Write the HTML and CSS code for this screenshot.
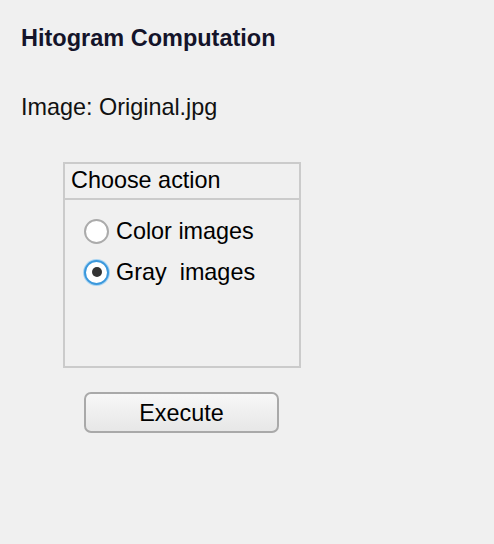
FILE: index.html
```html
<!DOCTYPE html>
<html>
<head>
<meta charset="utf-8">
<link rel="stylesheet" href="styles.css">
</head>
<body>
<div class="title">Hitogram Computation</div>
<div class="image-label">Image: Original.jpg</div>
<div class="group">
  <div class="group-header">Choose action</div>
  <div class="options">
    <div class="option">
      <span class="radio"></span>
      <span class="label">Color images</span>
    </div>
    <div class="option">
      <span class="radio checked"></span>
      <span class="label">Gray  images</span>
    </div>
  </div>
</div>
<button class="btn">Execute</button>
</body>
</html>
```
FILE: styles.css
```css
html, body {
  margin: 0;
  padding: 0;
  background: #f0f0f0;
}
body {
  font-family: "Liberation Sans", Arial, sans-serif;
  font-size: 23.4px;
  line-height: 26px;
  color: #000;
  display: flex;
  flex-direction: column;
  align-items: flex-start;
}
.title {
  margin: 25px 0 0 21px;
  font-weight: bold;
  font-size: 23.5px;
  color: #14142a;
}
.image-label {
  margin: 43px 0 0 21px;
  color: #111;
}
.group {
  box-sizing: border-box;
  margin: 42px 0 0 63px;
  width: 238px;
  height: 206px;
  border: 2px solid #cbcbcb;
  display: flex;
  flex-direction: column;
}
.group-header {
  padding: 3px 0 5px 6px;
  border-bottom: 2px solid #cbcbcb;
}
.options {
  padding: 18px 0 0 19px;
  display: flex;
  flex-direction: column;
  gap: 15px;
}
.option {
  display: flex;
  align-items: center;
  gap: 7px;
}
.label {
  white-space: pre;
}
.radio {
  box-sizing: border-box;
  width: 25px;
  height: 25px;
  border-radius: 50%;
  border: 2px solid #ababab;
  background: #fff;
  display: flex;
  align-items: center;
  justify-content: center;
}
.radio.checked {
  border-color: #3b98dc;
  box-shadow: 0 0 0 1px #a9d4f2;
}
.radio.checked::after {
  content: "";
  width: 10px;
  height: 10px;
  border-radius: 50%;
  background: #333;
}
.btn {
  box-sizing: border-box;
  margin: 24px 0 0 84px;
  width: 195px;
  height: 41px;
  padding: 0;
  border: 2px solid #a9a9a9;
  border-radius: 7px;
  background: linear-gradient(#f7f7f7, #e7e7e7);
  font-family: "Liberation Sans", Arial, sans-serif;
  font-size: 23.4px;
  line-height: 26px;
  color: #000;
}
```
